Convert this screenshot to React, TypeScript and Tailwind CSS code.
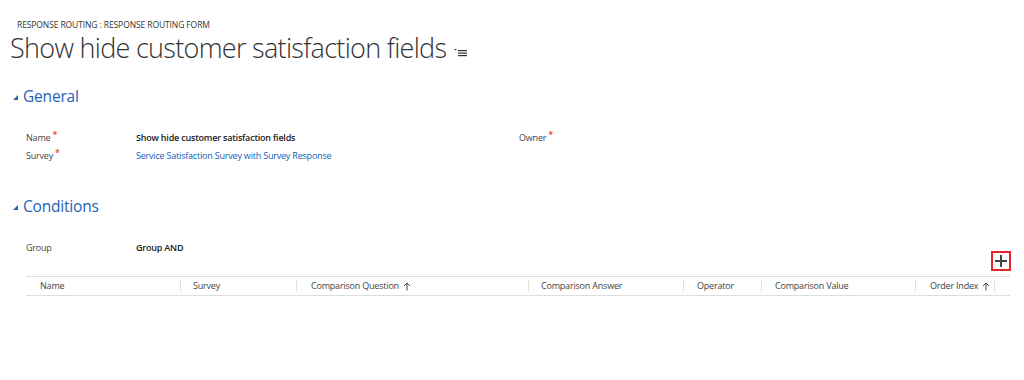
import React from "react";

const cols = [
  { label: "Name", w: "w-[155px]", pl: "pl-[14px]" },
  { label: "Survey", w: "w-[116px]", pl: "pl-[12px]" },
  { label: "Comparison Question", w: "w-[232px]", pl: "pl-[14px]", sort: true },
  { label: "Comparison Answer", w: "w-[155px]", pl: "pl-[12px]" },
  { label: "Operator", w: "w-[78px]", pl: "pl-[13px]" },
  { label: "Comparison Value", w: "w-[154px]", pl: "pl-[13px]" },
  { label: "Order Index", w: "w-[79px]", pl: "pl-[14px]", sort: true },
];

function Req() {
  return <span className="text-[#e00] text-[9px] leading-none relative -top-[3px] ml-[2px]">*</span>;
}

function SectionHead({ title }: { title: string }) {
  return (
    <div className="flex items-center pl-[13px] text-[#1e63b4]">
      <svg width="5" height="5" viewBox="0 0 5 5" className="mr-[5px] mt-[2px]">
        <path d="M5 0 L5 5 L0 5 Z" fill="#1e63b4" />
      </svg>
      <span className="text-[15.5px] leading-[22px] tracking-[-0.2px]">{title}</span>
    </div>
  );
}

function SortArrow() {
  return (
    <svg width="8" height="9" viewBox="0 0 8 9" className="ml-[4px]">
      <path d="M4 8.5 V1 M1 4 L4 1 L7 4" stroke="#444" strokeWidth="1" fill="none" />
    </svg>
  );
}

export default function App() {
  return (
    <div className="w-[1024px] h-[380px] bg-white text-[#444] font-['Open_Sans',sans-serif] overflow-hidden">
      <div className="pt-[19px] pl-[17px] text-[8.5px] leading-[12px] text-[#333] uppercase tracking-[-0.1px]">
        Response Routing : Response Routing Form
      </div>
      <div className="flex items-center pl-[10px]">
        <h1 className="text-[27px] font-light leading-[34px] text-[#333] tracking-[-0.7px]">
          Show hide customer satisfaction fields
        </h1>
        <svg width="14" height="9" viewBox="0 0 14 9" className="ml-[8px] mt-[8px]">
          <path d="M0 1 L3 1 L1.5 2.5 Z" fill="#333" />
          <rect x="4" y="2" width="9" height="1.2" fill="#333" />
          <rect x="4" y="4.5" width="9" height="1.2" fill="#333" />
          <rect x="4" y="7" width="9" height="1.2" fill="#333" />
        </svg>
      </div>

      <div className="mt-[20px]">
        <SectionHead title="General" />
      </div>

      <div className="mt-[22px] pl-[26px] text-[9px] leading-[18px] tracking-[-0.2px]">
        <div className="flex">
          <div className="w-[110px]">
            Name<Req />
          </div>
          <div className="w-[383px] font-semibold text-[#222]">Show hide customer satisfaction fields</div>
          <div>
            Owner<Req />
          </div>
        </div>
        <div className="flex">
          <div className="w-[110px]">
            Survey<Req />
          </div>
          <div className="text-[#1160b7]">Service Satisfaction Survey with Survey Response</div>
        </div>
      </div>

      <div className="mt-[30px]">
        <SectionHead title="Conditions" />
      </div>

      <div className="mt-[22px] pl-[26px] text-[9px] leading-[18px] tracking-[-0.2px] flex">
        <div className="w-[110px]">Group</div>
        <div className="font-semibold text-[#222]">Group AND</div>
      </div>

      <div className="flex justify-end pr-[13px] -mt-[6px]">
        <div className="w-[20px] h-[20px] border-2 border-[#e0252c] flex items-center justify-center">
          <svg width="12" height="12" viewBox="0 0 12 12">
            <rect x="5" y="0" width="2" height="12" fill="#444" />
            <rect x="0" y="5" width="12" height="2" fill="#444" />
          </svg>
        </div>
      </div>

      <div className="ml-[26px] mt-[5px] w-[984px] h-[20px] border-y border-[#ddd] flex items-center text-[9px] tracking-[-0.2px] text-[#444]">
        {cols.map((c) => (
          <div key={c.label} className={`${c.w} ${c.pl} h-[12px] flex items-center whitespace-nowrap border-r border-[#e2e2e2] shrink-0`}>
            {c.label}
            {c.sort && <SortArrow />}
          </div>
        ))}
      </div>
    </div>
  );
}
